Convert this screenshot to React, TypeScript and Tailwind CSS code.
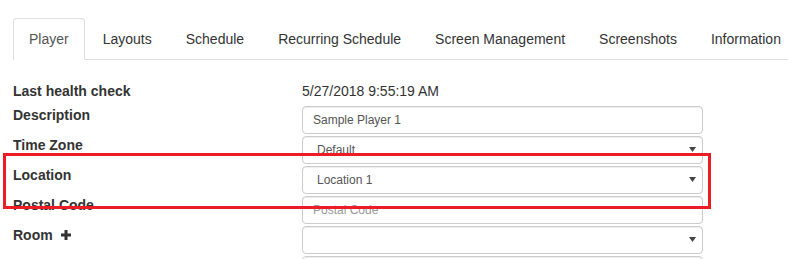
import React from 'react';

const tabs = ['Player', 'Layouts', 'Schedule', 'Recurring Schedule', 'Screen Management', 'Screenshots', 'Information'];

const Caret = () => (
  <svg width="7" height="5" viewBox="0 0 7 5" className="absolute right-[6px] top-[10px]">
    <path d="M0 0 H7 L3.5 5 Z" fill="#444" />
  </svg>
);

const PlusIcon = () => (
  <svg width="10" height="10" viewBox="0 0 10 10" className="ml-[8px]">
    <rect x="3.5" y="0" width="3" height="10" fill="#333" />
    <rect x="0" y="3.5" width="10" height="3" fill="#333" />
  </svg>
);

interface FieldProps {
  label: React.ReactNode;
  children: React.ReactNode;
}

const Field: React.FC<FieldProps> = ({ label, children }) => (
  <div className="flex items-start h-[28px] mb-[2px]">
    <div className="w-[289px] -mt-[1px] leading-[20px] font-bold text-[14px] text-[#333] flex items-center">{label}</div>
    {children}
  </div>
);

const Box: React.FC<{ select?: boolean; text?: string; placeholder?: boolean }> = ({ select, text, placeholder }) => (
  <div
    className={`relative w-[401px] h-[28px] border border-[#ccc] rounded-[4px] bg-white shadow-[inset_0_1px_1px_rgba(0,0,0,0.075)] flex items-center text-[12px] ${
      select ? 'pl-[14px]' : 'pl-[10px]'
    } ${placeholder ? 'text-[#999]' : 'text-[#555]'}`}
  >
    {text}
    {select && <Caret />}
  </div>
);

export default function App() {
  return (
    <div className="relative w-[788px] h-[259px] overflow-hidden bg-white font-['Liberation_Sans',Arial,sans-serif] text-[14px] text-[#333]">
      <div className="pl-[13px] pt-[18px]">
        <ul className="flex border-b border-[#ddd] whitespace-nowrap">
          {tabs.map((t, i) => (
            <li key={t} className="-mb-px mr-[2px]">
              <span
                className={`block px-[15px] py-[10px] leading-[20px] border rounded-t-[4px] ${
                  i === 0 ? 'border-[#ddd] border-b-white bg-white text-[#555]' : 'border-transparent text-[#333]'
                }`}
              >
                {t}
              </span>
            </li>
          ))}
        </ul>

        <div className="mt-[21px] flex leading-[20px] h-[20px]">
          <div className="w-[289px] font-bold">Last health check</div>
          <div>5/27/2018 9:55:19 AM</div>
        </div>

        <div className="mt-[5px]">
          <Field label="Description">
            <Box text="Sample Player 1" />
          </Field>
          <Field label="Time Zone">
            <Box select text="Default" />
          </Field>
          <Field label="Location">
            <Box select text="Location 1" />
          </Field>
          <Field label="Postal Code">
            <Box text="Postal Code" placeholder />
          </Field>
          <Field label={<>Room<PlusIcon /></>}>
            <Box select />
          </Field>
          <Field label="">
            <Box />
          </Field>
        </div>
      </div>

      <div className="absolute left-[3px] top-[153px] w-[708px] h-[56px] border-[3px] border-[#ed1c24]" />
    </div>
  );
}
